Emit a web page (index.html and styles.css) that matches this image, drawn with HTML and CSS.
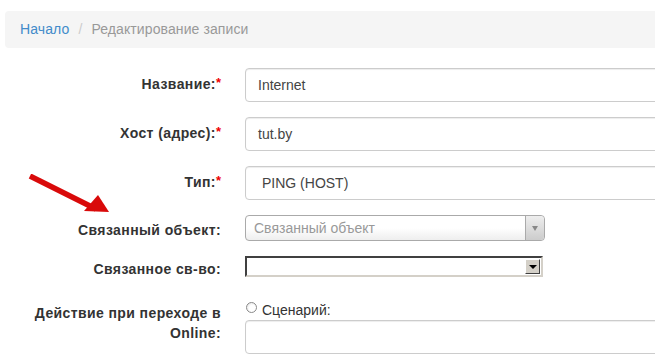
FILE: index.html
```html
<!DOCTYPE html>
<html lang="ru">
<head>
<meta charset="utf-8">
<link rel="stylesheet" href="styles.css">
</head>
<body>
<div class="page">
  <ol class="breadcrumb">
    <li><a href="#">Начало</a></li>
    <li class="sep">/</li>
    <li class="active">Редактирование записи</li>
  </ol>
  <form class="form">
    <div class="row">
      <label class="label">Название:<span class="req">*</span></label>
      <div class="control"><div class="input">Internet</div></div>
    </div>
    <div class="row">
      <label class="label">Хост (адрес):<span class="req">*</span></label>
      <div class="control"><div class="input">tut.by</div></div>
    </div>
    <div class="row">
      <label class="label">Тип:<span class="req">*</span></label>
      <div class="control"><div class="input sel">PING (HOST)</div></div>
    </div>
    <div class="row">
      <label class="label l-s2">Связанный объект:</label>
      <div class="control">
        <div class="select2">
          <span class="s2-text">Связанный объект</span>
          <span class="s2-arrow"><span class="tri"></span></span>
        </div>
      </div>
    </div>
    <div class="row">
      <label class="label l-native">Связанное св-во:</label>
      <div class="control">
        <div class="native">
          <span class="native-btn"><span class="tri-black"></span></span>
        </div>
      </div>
    </div>
    <div class="row">
      <label class="label l-last">Действие при переходе в Online:</label>
      <div class="control">
        <div class="radio-line"><span class="radio"></span><span class="radio-text">Сценарий:</span></div>
        <div class="input short"></div>
      </div>
    </div>
  </form>
  <svg class="arrow" width="110" height="60" viewBox="0 0 110 60">
    <line x1="2" y1="2" x2="68" y2="35" stroke="#d90a0a" stroke-width="5.5"/>
    <polygon points="70,21 81,38 56,37" fill="#d90a0a"/>
  </svg>
</div>
</body>
</html>
```

FILE: styles.css
```css
html, body {
  margin: 0;
  padding: 0;
  background: #fff;
  overflow: hidden;
}
body {
  font-family: "Liberation Sans", Arial, sans-serif;
  font-size: 14px;
  color: #333;
}
.page {
  position: relative;
  width: 720px;
  padding: 11px 0 0 5px;
}
.breadcrumb {
  list-style: none;
  margin: 0;
  padding: 8px 15px;
  height: 21px;
  line-height: 21px;
  background: #f5f5f5;
  border-radius: 4px;
  display: flex;
  gap: 9px;
  letter-spacing: 0.1px;
}
.breadcrumb li { margin: 0; }
.breadcrumb a { color: #428bca; text-decoration: none; }
.breadcrumb .sep { color: #ccc; }
.breadcrumb .active { color: #999; }

.form {
  margin-top: 20px;
  display: flex;
  flex-direction: column;
  gap: 15px;
}
.row {
  display: grid;
  grid-template-columns: 216px 1fr;
  column-gap: 24px;
  align-items: start;
}
.label {
  text-align: right;
  font-weight: bold;
  font-size: 14px;
  line-height: 20px;
  padding-top: 6px;
  color: #333;
  letter-spacing: 0.4px;
}
.req { color: #e00; font-weight: bold; position: relative; top: -2px; font-size: 13px; letter-spacing: 0; }
.l-s2 { padding-top: 5px; }
.l-native { padding-top: 3px; }
.l-last { padding-top: 9px; padding-left: 10px; }

.input {
  height: 20px;
  line-height: 20px;
  padding: 6px 12px;
  border: 1px solid #ccc;
  border-radius: 4px;
  box-shadow: inset 0 1px 1px rgba(0,0,0,0.075);
  background: #fff;
  color: #444;
  font-size: 14px;
}
.input.sel { padding-left: 16px; }
.input.short { margin-top: 0; }

.select2 {
  width: 298px;
  height: 24px;
  border: 1px solid #aaa;
  border-radius: 4px;
  background: linear-gradient(#fff 0%, #fff 50%, #eee 100%);
  display: flex;
  align-items: center;
  justify-content: space-between;
  box-sizing: content-box;
}
.s2-text {
  padding-left: 8px;
  color: #999;
  font-size: 14px;
}
.s2-arrow {
  width: 18px;
  height: 24px;
  border-left: 1px solid #aaa;
  border-radius: 0 4px 4px 0;
  background: linear-gradient(#eee, #ccc);
  display: flex;
  align-items: center;
  justify-content: center;
}
.tri {
  width: 0; height: 0;
  border-left: 3px solid transparent;
  border-right: 3px solid transparent;
  border-top: 5px solid #888;
  margin-top: 1px;
}

.native {
  width: 294px;
  height: 17px;
  border: 2px solid;
  border-color: #404040 #d4d0c8 #d4d0c8 #404040;
  background: #fff;
  display: flex;
  justify-content: flex-end;
  align-items: center;
  box-sizing: content-box;
  padding-right: 0;
}
.native-btn {
  width: 13px;
  height: 13px;
  margin-right: 1px;
  background: #d4d0c8;
  border: 1px solid;
  border-color: #fff #404040 #404040 #fff;
  display: flex;
  align-items: center;
  justify-content: center;
}
.tri-black {
  width: 0; height: 0;
  border-left: 4px solid transparent;
  border-right: 4px solid transparent;
  border-top: 4px solid #000;
}

.radio-line {
  display: flex;
  align-items: center;
  gap: 5px;
  height: 20px;
  padding-top: 6px;
}
.radio {
  width: 9px;
  height: 9px;
  border-radius: 50%;
  border: 1px solid #8a8a8a;
  background: radial-gradient(circle at 60% 60%, #fff 40%, #ddd 100%);
  margin-left: 1px;
  margin-top: -6px;
}
.radio-text {
  font-size: 14px;
  color: #333;
}

.arrow {
  position: absolute;
  left: 28px;
  top: 174px;
}
```
